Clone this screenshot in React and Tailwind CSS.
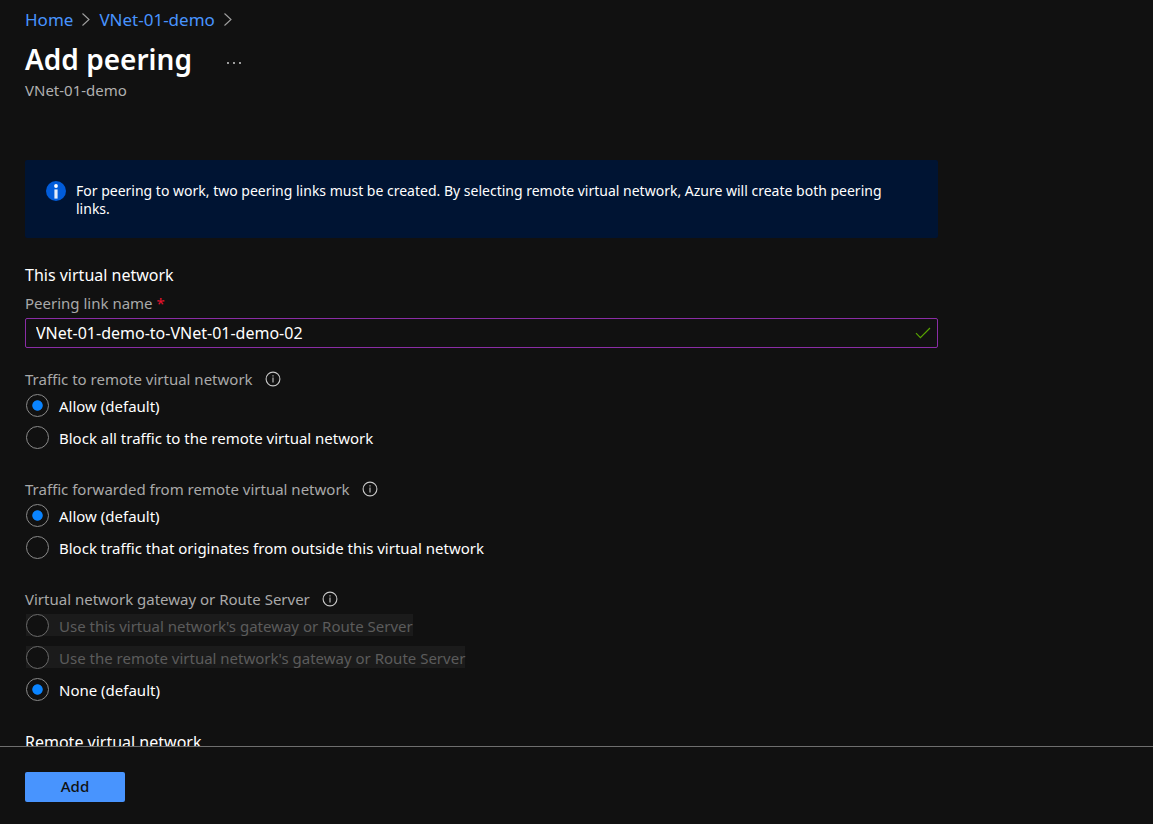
import { useState } from "react";

function Chevron() {
  return (
    <svg className="h-4 w-3 shrink-0" viewBox="0 0 12 16" fill="none" stroke="#a0a0a0" strokeWidth="1.1" aria-hidden="true">
      <path d="M2.5 1.5 9 7.5 2.5 13.5" />
    </svg>
  );
}

function InfoOutline() {
  return (
    <svg className="size-4 shrink-0" viewBox="0 0 16 16" fill="none" stroke="#c8c8c8" aria-hidden="true">
      <circle cx="8" cy="8" r="6.9" strokeWidth="1.1" />
      <path d="M8 6.6V11.4" strokeWidth="1.1" />
      <path d="M8 4.3v1.2" strokeWidth="1.1" />
    </svg>
  );
}

function InfoFilled() {
  return (
    <svg className="mt-px size-5 shrink-0" viewBox="0 0 20 20" aria-hidden="true">
      <circle cx="10" cy="10" r="10" fill="#015cda" />
      <circle cx="10" cy="5" r="1.9" fill="#fff" />
      <path d="M8.4 8.4h3.2v9.2H8.4z" fill="#e3ecfa" />
    </svg>
  );
}

function RadioGroup({ name, label, options, initial }) {
  const [value, setValue] = useState(initial);
  return (
    <fieldset className="mt-[27px] first-of-type:mt-[19px]">
      <legend className="flex h-6 items-center gap-3 text-[15px] text-[#a9a9a9]">
        {label}
        <InfoOutline />
      </legend>
      <div className="mt-[3px] flex flex-col items-start gap-2">
        {options.map((option) => (
          <div key={option.text} className="flex h-6 items-start pl-px">
            <label
              className={
                option.disabled
                  ? "flex h-[22px] items-center gap-[10px] bg-[#1b1b1b] text-[15px] text-[#5c5c5c]"
                  : "flex h-[22px] items-center gap-[10px] text-[15px] text-white"
              }
            >
              <input
                type="radio"
                name={name}
                disabled={option.disabled}
                checked={value === option.text}
                onChange={() => setValue(option.text)}
                className="size-[23px] shrink-0 appearance-none rounded-full border border-[#8a8a8a] bg-[#111111] bg-[radial-gradient(circle,#0a84ff_0,#0a84ff_4.8px,transparent_5.6px)] not-checked:bg-none disabled:border-[#6a6a6a]"
              />
              <span className="pt-[2px]">{option.text}</span>
            </label>
          </div>
        ))}
      </div>
    </fieldset>
  );
}

const groups = [
  {
    name: "traffic-to-remote",
    label: "Traffic to remote virtual network",
    initial: "Allow (default)",
    options: [{ text: "Allow (default)" }, { text: "Block all traffic to the remote virtual network" }],
  },
  {
    name: "traffic-forwarded",
    label: "Traffic forwarded from remote virtual network",
    initial: "Allow (default)",
    options: [
      { text: "Allow (default)" },
      { text: "Block traffic that originates from outside this virtual network" },
    ],
  },
  {
    name: "gateway",
    label: "Virtual network gateway or Route Server",
    initial: "None (default)",
    options: [
      { text: "Use this virtual network's gateway or Route Server", disabled: true },
      { text: "Use the remote virtual network's gateway or Route Server", disabled: true },
      { text: "None (default)" },
    ],
  },
];

export default function App() {
  const [linkName, setLinkName] = useState("VNet-01-demo-to-VNet-01-demo-02");
  return (
    <div className="flex h-screen flex-col bg-[#111111] font-['Noto_Sans','Open_Sans',sans-serif] text-white">
      <main className="min-h-0 flex-1 overflow-y-auto px-[25px] pt-2 [scrollbar-width:none]">
        <nav aria-label="Breadcrumb" className="flex h-6 items-center gap-[7px] text-[17px] text-[#4894fe]">
          <a href="#home">Home</a>
          <Chevron />
          <a href="#vnet">VNet-01-demo</a>
          <Chevron />
        </nav>

        <header>
          <div className="mt-[7px] flex h-10 items-center gap-8">
            <h1 className="text-[28px] font-semibold">Add peering</h1>
            <button type="button" aria-label="More actions" className="flex h-6 w-5 items-end justify-center pb-[6px]">
              <svg className="h-1 w-4" viewBox="0 0 16 4" fill="#e0e0e0" aria-hidden="true">
                <circle cx="2" cy="2" r="0.9" />
                <circle cx="8" cy="2" r="0.9" />
                <circle cx="14" cy="2" r="0.9" />
              </svg>
            </button>
          </div>
          <p className="mt-px text-[15px] leading-5 text-[#b0b0b0]">VNet-01-demo</p>
        </header>

        <form id="peering" className="max-w-[913px]" onSubmit={(event) => event.preventDefault()}>
          <div className="mt-15 flex gap-[10px] rounded-xs bg-[#001433] px-[21px] py-5">
            <InfoFilled />
            <p className="pt-[2px] text-sm leading-[18px]">
              For peering to work, two peering links must be created. By selecting remote virtual network, Azure will
              create both peering links.
            </p>
          </div>

          <h2 className="mt-[25px] text-base leading-6">This virtual network</h2>
          <label htmlFor="link-name" className="mt-1 flex h-6 items-center gap-1 text-[15px] text-[#a9a9a9]">
            Peering link name <span className="text-[#e8112d]">*</span>
          </label>
          <div className="mt-[3px] flex h-[30px] items-center rounded-xs border border-[#8a2da5] pr-[6px] pl-[10px]">
            <input
              id="link-name"
              type="text"
              value={linkName}
              onChange={(event) => setLinkName(event.target.value)}
              className="min-w-0 flex-1 bg-transparent text-base text-white outline-none"
            />
            <svg className="size-4 shrink-0" viewBox="0 0 16 16" fill="none" stroke="#57a300" strokeWidth="1.2" aria-hidden="true">
              <path d="M1 8.2 5.4 12.6 15 3" />
            </svg>
          </div>

          {groups.map((group) => (
            <RadioGroup key={group.name} {...group} />
          ))}

          <h2 className="mt-7 text-base leading-6">Remote virtual network</h2>
        </form>
      </main>

      <footer className="shrink-0 border-t border-[#6e6e6e] px-[25px] pt-[25px] pb-[22px]">
        <button
          type="submit"
          form="peering"
          className="h-[30px] w-[100px] rounded-xs bg-[#4894fe] pb-[2px] text-[15px] font-medium text-[#111111]"
        >
          Add
        </button>
      </footer>
    </div>
  );
}
